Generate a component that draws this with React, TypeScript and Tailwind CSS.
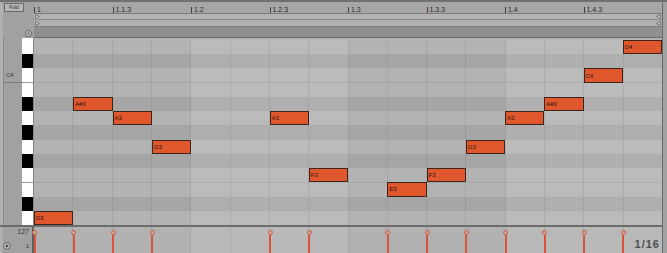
import React from 'react';

const ROWS = [
  { name: 'D4', black: false },
  { name: 'C#4', black: true },
  { name: 'C4', black: false },
  { name: 'B3', black: false },
  { name: 'A#3', black: true },
  { name: 'A3', black: false },
  { name: 'G#3', black: true },
  { name: 'G3', black: false },
  { name: 'F#3', black: true },
  { name: 'F3', black: false },
  { name: 'E3', black: false },
  { name: 'D#3', black: true },
  { name: 'D3', black: false },
];

const NOTES = [
  { step: 0, pitch: 'D3' },
  { step: 1, pitch: 'A#3' },
  { step: 2, pitch: 'A3' },
  { step: 3, pitch: 'G3' },
  { step: 6, pitch: 'A3' },
  { step: 7, pitch: 'F3' },
  { step: 9, pitch: 'E3' },
  { step: 10, pitch: 'F3' },
  { step: 11, pitch: 'G3' },
  { step: 12, pitch: 'A3' },
  { step: 13, pitch: 'A#3' },
  { step: 14, pitch: 'C4' },
  { step: 15, pitch: 'D4' },
];

const RULER = ['1', '1.1.3', '1.2', '1.2.3', '1.3', '1.3.3', '1.4', '1.4.3'];

const steps = Array.from({ length: 16 }, (_, i) => i);
const rowIndex = (p: string) => ROWS.findIndex((r) => r.name === p);
const hasNote = (s: number) => NOTES.some((n) => n.step === s);

// beat shading: beats 2 and 4 are lighter
const BeatShade = () => (
  <div className="absolute inset-0 flex pointer-events-none">
    <div className="flex-1" />
    <div className="flex-1 bg-white/[0.1]" />
    <div className="flex-1" />
    <div className="flex-1 bg-white/[0.1]" />
  </div>
);

const StepLines = () => (
  <div className="absolute inset-0 flex pointer-events-none">
    {steps.map((s) => (
      <div key={s} className={`flex-1 ${s === 0 ? '' : 'border-l border-black/[0.07]'}`} />
    ))}
  </div>
);

const LoopMark = ({ dir }: { dir: 'r' | 'l' }) => (
  <svg width="5" height="5" viewBox="0 0 5 5">
    {dir === 'r' ? (
      <path d="M0.5 0.5 L4.5 2.5 L0.5 4.5 Z" fill="#c8c8c8" stroke="#6a6a6a" strokeWidth="0.8" />
    ) : (
      <path d="M4.5 0.5 L0.5 2.5 L4.5 4.5 Z" fill="#c8c8c8" stroke="#6a6a6a" strokeWidth="0.8" />
    )}
  </svg>
);

export default function App() {
  return (
    <div className="w-[667px] h-[253px] overflow-hidden bg-[#a1a1a1] border-t-2 border-[#707070] flex flex-col font-['Liberation_Sans',Arial,sans-serif] text-[#2a2a2a] select-none">
      {/* Header: fold + ruler + loop strips */}
      <div className="flex h-[36px]">
        <div className="w-[34px] border-l-[3px] border-[#b0b0b0] flex flex-col justify-between pt-px pb-px">
          <div className="ml-px w-[20px] h-[9px] border border-[#6a6a6a] bg-[#b6b6b6] text-[5px] leading-[7px] text-center text-[#333]">
            Fold
          </div>
          <div className="self-end mr-[2px]">
            <svg width="7" height="7" viewBox="0 0 7 7">
              <circle cx="3.5" cy="3.5" r="3" fill="#c4c4c4" stroke="#555" strokeWidth="0.9" />
              <circle cx="3.5" cy="3.5" r="1.1" fill="#555" />
            </svg>
          </div>
        </div>
        <div className="w-[629px] flex flex-col border-r border-[#6a6a6a]">
          <div className="h-[12px] bg-[#a6a6a6] border-b border-[#7a7a7a] flex">
            {RULER.map((t) => (
              <div key={t} className="flex-1 flex items-end">
                <div className="h-[6px] border-l border-[#3f3f3f] pl-[2px] text-[7px] leading-[6px] text-[#2a2a2a]">
                  {t}
                </div>
              </div>
            ))}
          </div>
          <div className="h-[6px] bg-[#b3b3b3] border-b border-[#8a8a8a] flex items-center justify-between px-px">
            <LoopMark dir="r" />
            <LoopMark dir="l" />
          </div>
          <div className="h-[7px] bg-[#b0b0b0] border-b border-[#7e7e7e] flex items-center justify-between px-px">
            <LoopMark dir="r" />
            <LoopMark dir="l" />
          </div>
          <div className="h-[11px] bg-[#8f8f8f] border-b border-[#6a6a6a]" />
        </div>
        <div className="flex-1 bg-[#a1a1a1]" />
      </div>

      {/* Piano roll */}
      <div className="flex h-[187px]">
        <div className="w-[22px] border-l-[3px] border-[#b0b0b0] flex flex-col">
          <div className="h-[2px] border-l border-[#888]" />
          <div className="flex-1 flex flex-col border-l border-[#888]">
            {ROWS.map((r) => (
              <div
                key={r.name}
                className={`flex-1 flex items-center pl-[2px] text-[6px] text-[#333] ${
                  r.name === 'C4' ? 'border-b border-[#7a7a7a]' : ''
                }`}
              >
                {r.name === 'C4' ? 'C4' : ''}
              </div>
            ))}
          </div>
        </div>
        <div className="w-[12px] flex flex-col border-r border-[#888]">
          <div className="h-[2px] bg-white" />
          <div className="flex-1 flex flex-col">
            {ROWS.map((r, i) => (
              <div
                key={r.name}
                className={`flex-1 ${r.black ? 'bg-black' : 'bg-white'} ${
                  !r.black && i > 0 && !ROWS[i - 1].black ? 'border-t border-[#9a9a9a]' : ''
                }`}
              />
            ))}
          </div>
        </div>
        <div className="w-[628px] relative flex flex-col border-r border-[#6a6a6a] box-content">
          <div className="h-[2px] bg-[#b2b2b2]" />
          <div className="flex-1 relative flex flex-col">
            {ROWS.map((r, i) => (
              <div
                key={r.name}
                className={`flex-1 ${r.black ? 'bg-[#a6a6a6]' : 'bg-[#b3b3b3]'} ${
                  !r.black && i > 0 && !ROWS[i - 1].black ? 'border-t border-[#a5a5a5]' : ''
                }`}
              />
            ))}
            <BeatShade />
            <StepLines />
            <div className="absolute inset-0 grid grid-cols-[repeat(16,minmax(0,1fr))] grid-rows-[repeat(13,minmax(0,1fr))]">
              {NOTES.map((n) => (
                <div
                  key={n.step}
                  style={{ gridColumn: n.step + 1, gridRow: rowIndex(n.pitch) + 1 }}
                  className="bg-[#e0572e] border border-[#3b2418] flex items-center pl-[1px] text-[6px] leading-none text-[#2a1208]"
                >
                  {n.pitch}
                </div>
              ))}
            </div>
          </div>
        </div>
        <div className="flex-1" />
      </div>

      {/* Divider */}
      <div className="h-[2px] bg-[#6c6c6c] mr-[4px]" />

      {/* Velocity lane */}
      <div className="flex flex-1">
        <div className="w-[32px] border-l-[3px] border-[#b0b0b0] flex flex-col justify-between pr-[3px] pb-[3px] pt-px">
          <div className="text-right text-[7px] leading-[7px] text-[#333]">127</div>
          <div className="flex items-center justify-between">
            <svg width="8" height="8" viewBox="0 0 8 8">
              <circle cx="4" cy="4" r="3.4" fill="#b8b8b8" stroke="#5a5a5a" strokeWidth="0.8" />
              <path d="M3 2.4 L5.6 4 L3 5.6 Z" fill="#2a2a2a" />
            </svg>
            <span className="text-[6px] leading-[6px] text-[#333]">1</span>
          </div>
        </div>
        <div className="w-[2px] bg-[#5e5e5e]" />
        <div className="w-[629px] relative bg-[#b1b1b1] border-r border-[#6a6a6a]">
          <BeatShade />
          <StepLines />
          <div className="absolute inset-0 flex">
            {steps.map((s) => (
              <div key={s} className="flex-1 flex flex-col items-start pt-[3px]">
                {hasNote(s) && (
                  <div className="-ml-[2px] flex flex-col items-center h-full">
                    <div className="w-[5px] h-[5px] rounded-full border border-[#d8553a] bg-[#c9aaa0]" />
                    <div className="w-[2px] flex-1 bg-[#d8553a]" />
                  </div>
                )}
              </div>
            ))}
          </div>
          <div className="absolute right-[2px] bottom-[4px] text-[11px] leading-[9px] font-bold tracking-[1px] text-[#4e4e4e]">
            1/16
          </div>
        </div>
        <div className="flex-1" />
      </div>
    </div>
  );
}
